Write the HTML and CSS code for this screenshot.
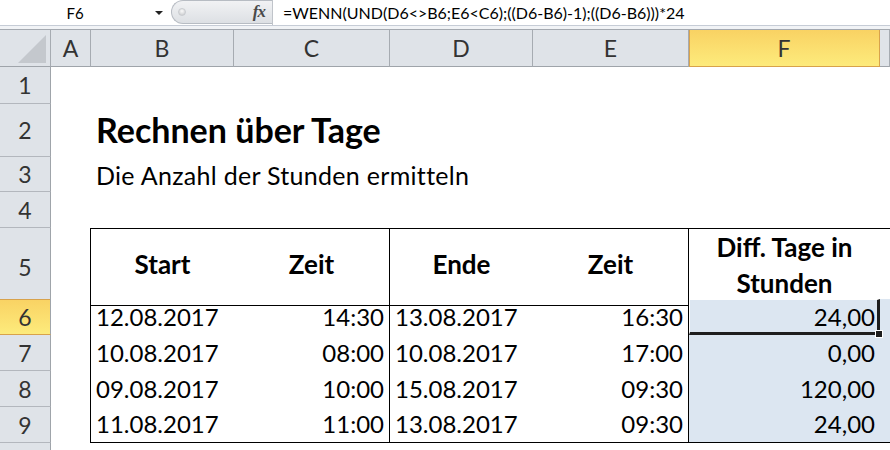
FILE: index.html
```html
<!DOCTYPE html>
<html lang="de">
<head>
    <meta charset="UTF-8">
    <meta name="viewport" content="width=device-width, initial-scale=1.0">
    <title>Rechnen über Tage</title>
    <link rel="stylesheet" href="styles.css">
</head>
<body>
    <div class="window">
        <div class="formula-bar">
            <div class="name-box"><span class="name">F6</span><span class="arrow"></span></div>
            <div class="fx-zone"><span class="knob"></span><span class="fx">fx</span></div>
            <div class="formula">=WENN(UND(D6&lt;&gt;B6;E6&lt;C6);((D6-B6)-1);((D6-B6)))*24</div>
        </div>
        <div class="spacer"></div>

        <div class="sheet">
            <div class="row col-heads">
                <div class="corner">
                    <svg width="50" height="36" viewBox="0 0 50 36"><path d="M18 33 H46 V5 Z" fill="#c4c8cd"/></svg>
                </div>
                <div class="col-head">A</div>
                <div class="col-head">B</div>
                <div class="col-head">C</div>
                <div class="col-head">D</div>
                <div class="col-head">E</div>
                <div class="col-head sel">F</div>
                <div class="col-head"></div>
            </div>

            <div class="row r1"><div class="row-head">1</div></div>
            <div class="row r2">
                <div class="row-head">2</div>
                <div class="cell title">Rechnen über Tage</div>
            </div>
            <div class="row r3">
                <div class="row-head">3</div>
                <div class="cell subtitle">Die Anzahl der Stunden ermitteln</div>
            </div>
            <div class="row r4"><div class="row-head">4</div></div>

            <div class="row r5">
                <div class="row-head">5</div>
                <div class="edge"></div>
                <div class="cell head t-top t-bottom">Start</div>
                <div class="cell head t-top t-bottom sep">Zeit</div>
                <div class="cell head t-top t-bottom">Ende</div>
                <div class="cell head t-top t-bottom sep">Zeit</div>
                <div class="cell head t-top t-bottom wrap">Diff. Tage in<br>Stunden</div>
                <div class="cell t-top t-bottom"></div>
            </div>

            <div class="row data">
                <div class="row-head sel">6</div>
                <div class="edge"></div>
                <div class="cell">12.08.2017</div>
                <div class="cell num sep">14:30</div>
                <div class="cell">13.08.2017</div>
                <div class="cell num sep">16:30</div>
                <div class="cell num blue active">24,00</div>
                <div class="cell blue"></div>
            </div>
            <div class="row data">
                <div class="row-head">7</div>
                <div class="edge"></div>
                <div class="cell">10.08.2017</div>
                <div class="cell num sep">08:00</div>
                <div class="cell">10.08.2017</div>
                <div class="cell num sep">17:00</div>
                <div class="cell num blue">0,00</div>
                <div class="cell blue"></div>
            </div>
            <div class="row data">
                <div class="row-head">8</div>
                <div class="edge"></div>
                <div class="cell">09.08.2017</div>
                <div class="cell num sep">10:00</div>
                <div class="cell">15.08.2017</div>
                <div class="cell num sep">09:30</div>
                <div class="cell num blue">120,00</div>
                <div class="cell blue"></div>
            </div>
            <div class="row data">
                <div class="row-head">9</div>
                <div class="edge"></div>
                <div class="cell t-bottom">11.08.2017</div>
                <div class="cell num sep t-bottom">11:00</div>
                <div class="cell t-bottom">13.08.2017</div>
                <div class="cell num sep t-bottom">09:30</div>
                <div class="cell num blue t-bottom">24,00</div>
                <div class="cell blue t-bottom"></div>
            </div>
            <div class="row r10"><div class="row-head"></div></div>
        </div>
    </div>
</body>
</html>
```

FILE: styles.css
```css
* {
    box-sizing: border-box;
}
body {
    margin: 0;
    font-family: Lato, "Open Sans", sans-serif;
    background-color: #fff;
    color: #000;
}
.window {
    width: 890px;
    height: 450px;
    overflow: hidden;
}

/* formula bar */
.formula-bar {
    display: flex;
    height: 26px;
    border-bottom: 1px solid #c6ccd6;
    background: #fff;
}
.name-box {
    width: 171px;
    display: flex;
    align-items: center;
}
.name {
    width: 150px;
    text-align: center;
    font-size: 15px;
}
.arrow {
    border-left: 4px solid transparent;
    border-right: 4px solid transparent;
    border-top: 4px solid #222;
    margin-left: 5px;
}
.fx-zone {
    width: 101px;
    height: 24px;
    display: flex;
    align-items: center;
    justify-content: space-between;
    padding: 0 7px 0 6px;
    border: 1px solid #b7bcc3;
    border-right: none;
    border-radius: 12px 0 0 12px;
    background: linear-gradient(#f1f2f4, #dde0e4);
}
.knob {
    width: 8px;
    height: 8px;
    border-radius: 50%;
    background: radial-gradient(circle at 50% 35%, #fafafa, #c4c6c9);
    border: 1px solid #c9ccd0;
}
.fx {
    font-family: "Liberation Serif", serif;
    font-style: italic;
    font-weight: bold;
    font-size: 17px;
    color: #4a4a4a;
    letter-spacing: -1px;
}
.formula {
    flex: 1;
    display: flex;
    align-items: center;
    padding-left: 10px;
    border-left: 1px solid #c0c4ca;
    font-size: 16px;
    white-space: nowrap;
}
.spacer {
    height: 4px;
    background: #f1f3f6;
    border-bottom: 1px solid #a4a9b0;
}

/* grid */
.row {
    display: grid;
    grid-template-columns: 51px 40px 143px 156px 143px 156px 191px 1fr;
}
.col-heads { height: 37px; }
.r1 { height: 37px; }
.r2 { height: 53px; }
.r3 { height: 35px; }
.r4 { height: 36px; }
.r5 { height: 71px; }
.data { height: 36px; }
.r10 { height: 20px; }

.corner, .col-head, .row-head {
    background: #dfe3e8;
    color: #333;
    font-size: 23px;
    display: flex;
    justify-content: center;
    align-items: center;
}
.corner {
    border-right: 1px solid #a6abb1;
    border-bottom: 1px solid #9fa4aa;
}
.col-head {
    border-right: 1px solid #a6abb1;
    border-bottom: 1px solid #9fa4aa;
}
.row-head {
    border-right: 1px solid #9fa4aa;
    border-bottom: 1px solid #b3b7bd;
}
.col-head.sel, .row-head.sel {
    background: linear-gradient(#f9d263, #fdeb7c);
    border-color: #d8a24b;
    box-shadow: inset 1px 0 #d8a24b;
}
.row-head.sel {
    border-right-color: #9fa4aa;
    box-shadow: inset 0 1px #d8a24b;
}

/* cells */
.cell {
    display: flex;
    align-items: center;
    padding: 0 5px;
    font-size: 24px;
    line-height: 1.2;
    white-space: nowrap;
}
.title {
    grid-column: 3 / -1;
    font-size: 34px;
    font-weight: bold;
}
.subtitle {
    grid-column: 3 / -1;
    font-size: 25px;
    letter-spacing: 0.3px;
}
.head {
    justify-content: center;
    text-align: center;
    font-size: 26px;
    font-weight: bold;
    padding-bottom: 4px;
}
.wrap {
    line-height: 36px;
}
.num {
    justify-content: flex-end;
}
.blue {
    background: #dce6f1;
}

/* table borders */
.edge {
    border-right: 1px solid #000;
}
.t-top {
    border-top: 1px solid #000;
}
.t-bottom {
    border-bottom: 1px solid #000;
}
.sep {
    border-right: 1px solid #000;
}

/* active cell */
.active {
    position: relative;
    z-index: 1;
}
.active::before {
    content: "";
    position: absolute;
    left: 0;
    top: 0;
    right: 0;
    bottom: 0;
    border-left: 1px solid #fff;
    border-top: 1px solid #fff;
    border-right: 3px solid #1e1e1e;
    border-bottom: 3px solid #1e1e1e;
}
.active::after {
    content: "";
    position: absolute;
    right: -3px;
    bottom: -3px;
    width: 6px;
    height: 6px;
    background: #1e1e1e;
    border: 1px solid #fff;
}
```
